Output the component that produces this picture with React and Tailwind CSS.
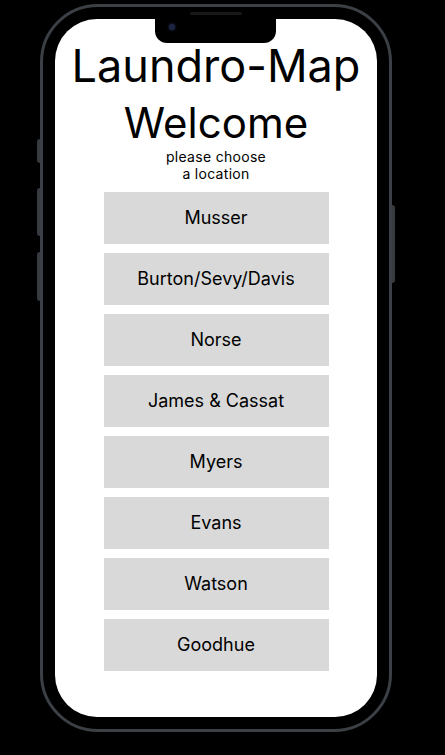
import React from 'react';

const locations = [
  'Musser',
  'Burton/Sevy/Davis',
  'Norse',
  'James & Cassat',
  'Myers',
  'Evans',
  'Watson',
  'Goodhue',
];

function PhoneFrame({ children }) {
  return (
    <div className="relative ml-[40px] mt-[4px] w-[352px] h-[728px] rounded-[58px] bg-black border-[3px] border-[#3a4045] p-[12px]">
      {/* side buttons */}
      <div className="absolute left-[-6px] top-[132px] w-[3px] h-[24px] rounded-l-sm bg-[#363b40]" />
      <div className="absolute left-[-6px] top-[181px] w-[3px] h-[48px] rounded-l-sm bg-[#363b40]" />
      <div className="absolute left-[-6px] top-[245px] w-[3px] h-[49px] rounded-l-sm bg-[#363b40]" />
      <div className="absolute right-[-6px] top-[198px] w-[3px] h-[78px] rounded-r-sm bg-[#363b40]" />
      {/* speaker */}
      <div className="absolute left-[147px] top-[5px] w-[52px] h-[3px] rounded-full bg-[#16181a]" />
      <div className="relative w-full h-full rounded-[42px] bg-white overflow-hidden">
        {/* notch */}
        <div className="absolute left-[100px] top-0 w-[121px] h-[24px] rounded-b-[12px] bg-black">
          <div className="absolute left-[14px] top-[5px] w-[6px] h-[6px] rounded-full bg-[#1b2440] shadow-[0_0_3px_#27335a]" />
        </div>
        {children}
      </div>
    </div>
  );
}

export default function App() {
  return (
    <div className="w-[445px] h-[755px] bg-black overflow-hidden" style={{ fontFamily: 'Inter, "Noto Sans", sans-serif' }}>
      <PhoneFrame>
        <div className="flex flex-col items-center pt-[20px] text-black">
          <h1 className="text-[45px] leading-[54.5px] font-normal">Laundro-Map</h1>
          <h2 className="mt-[4px] text-[42px] leading-[49px] font-normal">Welcome</h2>
          <p className="mt-[1px] text-[14px] leading-[17px] tracking-[0.3px] text-center">
            please choose
            <br />
            a location
          </p>
          <div className="mt-[10px] flex flex-col gap-[9px]">
            {locations.map((loc) => (
              <button
                key={loc}
                className="w-[225px] h-[52px] bg-[#d9d9d9] text-[18px] text-black flex items-center justify-center"
              >
                {loc}
              </button>
            ))}
          </div>
        </div>
      </PhoneFrame>
    </div>
  );
}
